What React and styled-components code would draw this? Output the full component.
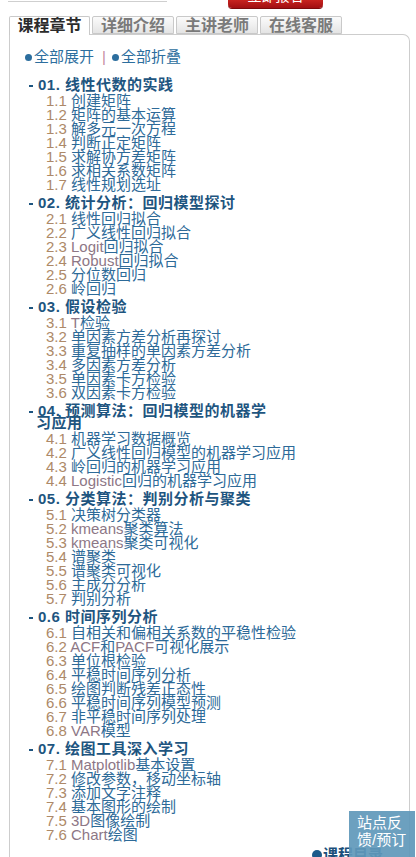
import React from 'react';
import styled, { createGlobalStyle } from 'styled-components';

const GlobalStyle = createGlobalStyle`
  html, body {
    margin: 0;
    padding: 0;
    overflow: hidden;
    background: #fff;
  }
  body {
    font-family: "Liberation Sans", "Noto Sans CJK SC", sans-serif;
  }
`;

const Page = styled.div`
  width: 416px;
  height: 857px;
  overflow: hidden;
  position: relative;
`;

const TopBar = styled.div`
  display: flex;
  align-items: flex-start;
  height: 9px;
`;

const SearchEdge = styled.div`
  margin-left: 8px;
  width: 159px;
  height: 1px;
  border-bottom: 1px solid #cfcfcf;
`;

const RedButton = styled.div`
  margin-left: 61px;
  width: 95px;
  height: 8px;
  overflow: hidden;
  border-radius: 0 0 4px 4px;
  background: linear-gradient(#c8231f, #a10f12);
  box-shadow: 0 1px 0 #7d0a0c;
  color: #fff;
  font-size: 14px;
  text-align: center;
  span {
    display: block;
    margin-top: -12px;
    line-height: 16px;
  }
`;

const Tabs = styled.div`
  display: flex;
  gap: 2px;
  margin-top: 7px;
  padding-left: 9px;
  position: relative;
  z-index: 2;
`;

const Tab = styled.div`
  box-sizing: border-box;
  width: ${p => (p.$active ? 81 : 82)}px;
  height: ${p => (p.$active ? 19 : 18)}px;
  margin-bottom: ${p => (p.$active ? -1 : 0)}px;
  border: 1px solid #c9c9c9;
  border-bottom: ${p => (p.$active ? 'none' : '1px solid #c9c9c9')};
  border-radius: 2px 2px 0 0;
  background: ${p => (p.$active ? '#fff' : 'linear-gradient(#fbfbfb, #e4e4e4)')};
  color: ${p => (p.$active ? '#2b2b2b' : '#7a7a7a')};
  font-weight: bold;
  font-size: 16px;
  line-height: 17px;
  text-align: center;
`;

const Panel = styled.div`
  margin-left: 9px;
  width: 401px;
  box-sizing: border-box;
  min-height: 880px;
  border: 1px solid #cdcdcd;
  border-bottom: none;
  border-top-right-radius: 7px;
  padding: 14px 0 0 15px;
`;

const Toggles = styled.div`
  display: flex;
  align-items: center;
  height: 16px;
  font-size: 15px;
  line-height: 16px;
  color: #2c6e9e;
`;

const Dot = styled.span`
  display: inline-block;
  width: 7px;
  height: 7px;
  border-radius: 50%;
  background: #2c6e9e;
  margin-right: 2px;
`;

const Sep = styled.span`
  color: #c58ba0;
  margin: 0 6px 0 8px;
`;

const List = styled.div`
  margin-top: 14px;
`;

const Chapter = styled.div`
  margin-top: 5px;
`;

const ChapterTitle = styled.div`
  position: relative;
  margin-left: 11px;
  width: 238px;
  font-size: 15px;
  font-weight: bold;
  line-height: 12px;
  letter-spacing: 0.5px;
  color: #1e5580;
  text-indent: 2px;
  margin-bottom: 3px;
  &::before {
    content: '';
    position: absolute;
    left: -7px;
    top: 6px;
    width: 4px;
    height: 2px;
    background: #1e5580;
  }
`;

const Item = styled.div`
  margin-left: 21px;
  white-space: nowrap;
  font-size: 15px;
  line-height: 14px;
  color: #2d6a98;
`;

const Num = styled.span`
  color: #ad8968;
`;

const Latin = styled.span`
  color: #8d7786;
`;

const Feedback = styled.div`
  position: absolute;
  left: 349px;
  top: 811px;
  width: 66px;
  height: 50px;
  box-sizing: border-box;
  padding: 3px 0 0 8px;
  background: rgba(96, 152, 186, 0.92);
  color: #fff;
  font-size: 15px;
  line-height: 17px;
  z-index: 5;
`;

const Catalog = styled.div`
  position: absolute;
  left: 312px;
  top: 847px;
  display: flex;
  align-items: center;
  gap: 1px;
  font-size: 15px;
  font-weight: bold;
  line-height: 16px;
  color: #1b4f7a;
  z-index: 4;
`;

const CatalogDot = styled.span`
  display: inline-block;
  width: 10px;
  height: 10px;
  border-radius: 50%;
  background: #1b5a8a;
`;

const chapters = [
  {
    title: '01. 线性代数的实践',
    items: ['1.1 创建矩阵', '1.2 矩阵的基本运算', '1.3 解多元一次方程', '1.4 判断正定矩阵', '1.5 求解协方差矩阵', '1.6 求相关系数矩阵', '1.7 线性规划选址'],
  },
  {
    title: '02. 统计分析：回归模型探讨',
    items: ['2.1 线性回归拟合', '2.2 广义线性回归拟合', '2.3 Logit回归拟合', '2.4 Robust回归拟合', '2.5 分位数回归', '2.6 岭回归'],
  },
  {
    title: '03. 假设检验',
    items: ['3.1 T检验', '3.2 单因素方差分析再探讨', '3.3 重复抽样的单因素方差分析', '3.4 多因素方差分析', '3.5 单因素卡方检验', '3.6 双因素卡方检验'],
  },
  {
    title: '04. 预测算法：回归模型的机器学习应用',
    items: ['4.1 机器学习数据概览', '4.2 广义线性回归模型的机器学习应用', '4.3 岭回归的机器学习应用', '4.4 Logistic回归的机器学习应用'],
  },
  {
    title: '05. 分类算法：判别分析与聚类',
    items: ['5.1 决策树分类器', '5.2 kmeans聚类算法', '5.3 kmeans聚类可视化', '5.4 谱聚类', '5.5 谱聚类可视化', '5.6 主成分分析', '5.7 判别分析'],
  },
  {
    title: '0.6 时间序列分析',
    items: ['6.1 自相关和偏相关系数的平稳性检验', '6.2 ACF和PACF可视化展示', '6.3 单位根检验', '6.4 平稳时间序列分析', '6.5 绘图判断残差正态性', '6.6 平稳时间序列模型预测', '6.7 非平稳时间序列处理', '6.8 VAR模型'],
  },
  {
    title: '07. 绘图工具深入学习',
    items: ['7.1 Matplotlib基本设置', '7.2 修改参数，移动坐标轴', '7.3 添加文字注释', '7.4 基本图形的绘制', '7.5 3D图像绘制', '7.6 Chart绘图'],
  },
];

const tabs = ['课程章节', '详细介绍', '主讲老师', '在线客服'];

// split "2.3 Logit回归拟合" into number + runs of latin / cjk text
const ItemText = ({ text }) => {
  const space = text.indexOf(' ');
  const num = text.slice(0, space);
  const rest = text.slice(space);
  const parts = rest.match(/[A-Za-z0-9]+|[^A-Za-z0-9]+/g) || [];
  return (
    <Item>
      <Num>{num}</Num>
      {parts.map((p, i) => (/^[A-Za-z0-9]+$/.test(p) ? <Latin key={i}>{p}</Latin> : <span key={i}>{p}</span>))}
    </Item>
  );
};

const App = () => (
  <Page>
    <GlobalStyle />
    <TopBar>
      <SearchEdge />
      <RedButton>
        <span>立即报名</span>
      </RedButton>
    </TopBar>
    <Tabs>
      {tabs.map((t, i) => (
        <Tab key={t} $active={i === 0}>{t}</Tab>
      ))}
    </Tabs>
    <Panel>
      <Toggles>
        <Dot />全部展开<Sep>|</Sep><Dot />全部折叠
      </Toggles>
      <List>
        {chapters.map(ch => (
          <Chapter key={ch.title}>
            <ChapterTitle>{ch.title}</ChapterTitle>
            {ch.items.map(it => (
              <ItemText key={it} text={it} />
            ))}
          </Chapter>
        ))}
      </List>
    </Panel>
    <Catalog>
      <CatalogDot />课程目录
    </Catalog>
    <Feedback>
      站点反<br />馈/预订
    </Feedback>
  </Page>
);

export default App;
